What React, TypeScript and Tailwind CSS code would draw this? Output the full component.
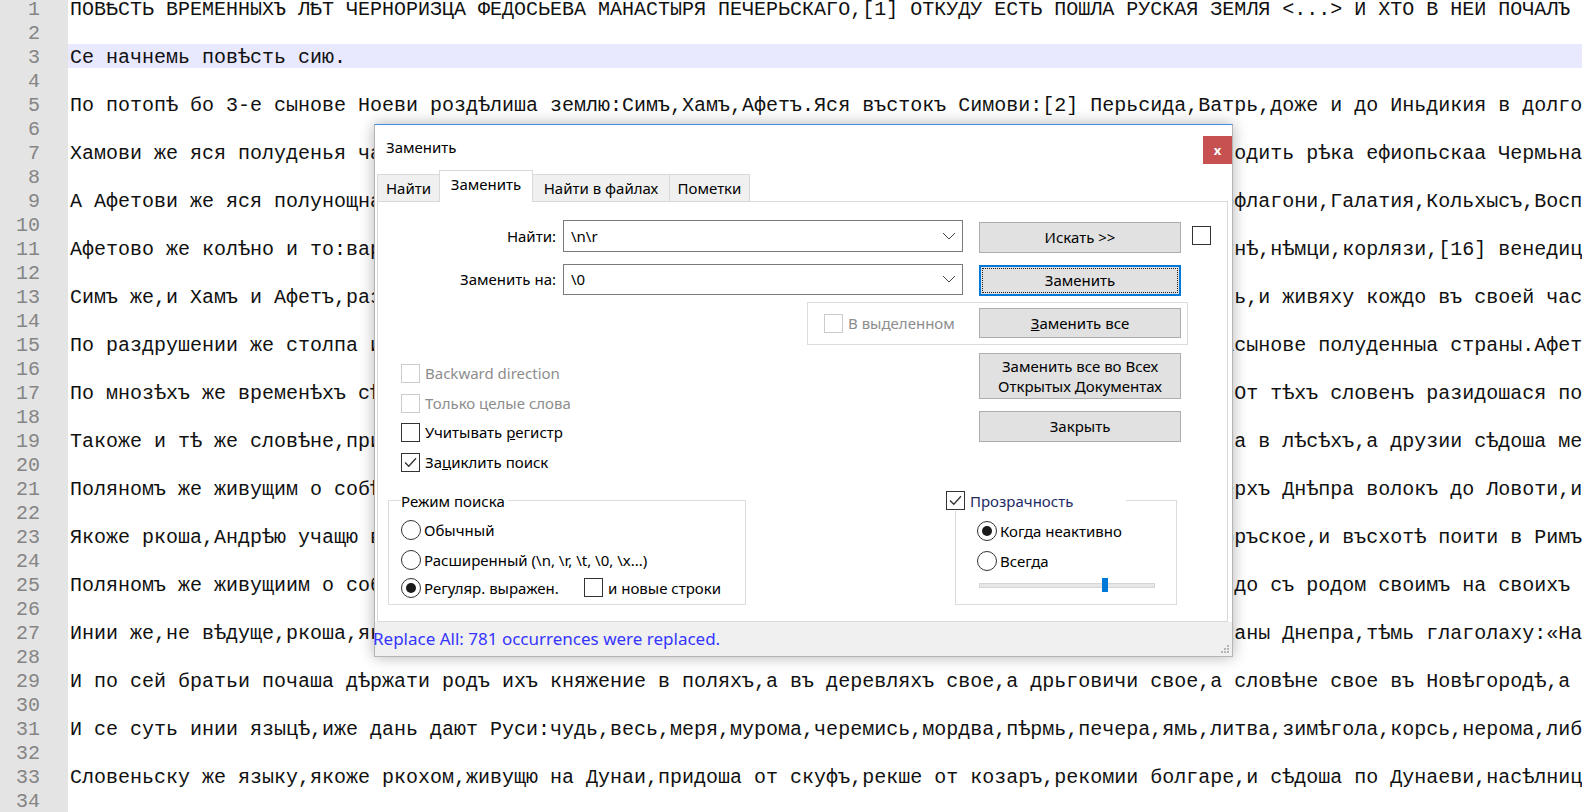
import React from 'react';

const FILL =
  'стьи:Егупетъ,Ефиопья,прилежащи ко Индомъ,другая же Ефиопья,из нея же исходить рѣка ефиопьскаа Чермьна,текущи на въстокъ,Фива,Ливия,прилежащи до Куриниа,Мармарья,Сурьтѣ,Ливия другая,Нумидья,Масурья,Мавритания противу сущи Гадирѣ.';

// left part + hidden middle + right part, so that the right part starts at column 97
const mk = (left: string, right: string, k: number) => left + FILL.slice(k, k + 97 - left.length) + right;

const lines: Record<number, string> = {
  1: 'ПОВѢСТЬ ВРЕМЕННЫХЪ ЛѢТ ЧЕРНОРИЗЦА ФЕДОСЬЕВА МАНАСТЫРЯ ПЕЧЕРЬСКАГО,[1] ОТКУДУ ЕСТЬ ПОШЛА РУСКАЯ ЗЕМЛЯ <...> И ХТО В НЕЙ ПОЧАЛЪ ПЕРВѢЕ КНЯЖИТИ',
  3: 'Се начнемь повѣсть сию.',
  5: 'По потопѣ бо 3-е сынове Ноеви роздѣлиша землю:Симъ,Хамъ,Афетъ.Яся въстокъ Симови:[2] Перьсида,Ватрь,доже и до Иньдикия в долготу и в ширину',
  7: mk('Хамови же яся полуденья ча', 'одить рѣка ефиопьскаа Чермьна,текущи на въстокъ', 0),
  9: mk('А Афетови же яся полунощная страны', 'флагони,Галатия,Кольхысъ,Воспории,Меоти', 10),
  11: mk('Афетово же колѣно и то:варязи,свеи,урмане', 'нѣ,нѣмци,корлязи,[16] венедици,фрягове', 20),
  13: mk('Симъ же,и Хамъ и Афетъ,раздѣлиша землю', 'ь,и живяху кождо въ своей части.', 30),
  15: mk('По раздрушении же столпа и', 'сынове полуденныа страны.Афетови же', 40),
  17: mk('По мнозѣхъ же временѣхъ сѣли суть словѣни', 'От тѣхъ словенъ разидошася по земли', 5),
  19: mk('Такоже и тѣ же словѣне,пришедше', 'а в лѣсѣхъ,а друзии сѣдоша межи Припетью', 15),
  21: mk('Поляномъ же живущим о собѣ', 'рхъ Днѣпра волокъ до Ловоти,и по Ловоти', 25),
  23: mk('Якоже ркоша,Андрѣю учащю въ Синопии', 'ръское,и въсхотѣ поити в Римъ.', 35),
  25: mk('Поляномъ же живущиим о собѣ', 'до съ родом своимъ на своихъ мѣстѣхъ', 45),
  27: mk('Инии же,не вѣдуще,ркоша,якоже', 'аны Днепра,тѣмь глаголаху:«На перевозъ', 50),
  29: 'И по сей братьи почаша дѣржати родъ ихъ княжение в поляхъ,а въ деревляхъ свое,а дрьговичи свое,а словѣне свое въ Новѣгородѣ,а другое на Полотѣ',
  31: 'И се суть инии языцѣ,иже дань дают Руси:чудь,весь,меря,мурома,черемись,мордва,пѣрмь,печера,ямь,литва,зимѣгола,корсь,нерома,либь',
  33: 'Словеньску же языку,якоже ркохом,живущю на Дунаи,придоша от скуфъ,рекше от козаръ,рекомии болгаре,и сѣдоша по Дунаеви,насѣлници словеномъ',
};

const nums = Array.from({ length: 34 }, (_, i) => i + 1);

const Check = ({
  checked = false,
  disabled = false,
  children,
}: {
  checked?: boolean;
  disabled?: boolean;
  children?: React.ReactNode;
}) => (
  <div className="flex h-[20px] items-center">
    <span
      className={`flex h-[19px] w-[19px] shrink-0 items-center justify-center border bg-white ${
        disabled ? 'border-[#cccccc]' : 'border-[#333333]'
      }`}
    >
      {checked && (
        <svg width="15" height="15" viewBox="0 0 15 15">
          <path d="M2 7.5 L5.8 11.3 L13 3.2" fill="none" stroke="#333" strokeWidth="1.3" />
        </svg>
      )}
    </span>
    {children && <span className={`ml-[5px] ${disabled ? 'text-[#8d8d8d]' : ''}`}>{children}</span>}
  </div>
);

const Radio = ({ on = false, children }: { on?: boolean; children: React.ReactNode }) => (
  <div className="flex h-[20px] items-center">
    <span className="flex h-[20px] w-[20px] shrink-0 items-center justify-center rounded-full border border-[#333333] bg-white">
      {on && <span className="h-[10px] w-[10px] rounded-full bg-[#1a1a1a]" />}
    </span>
    <span className="ml-[3px]">{children}</span>
  </div>
);

const Btn = ({ children, className = '' }: { children: React.ReactNode; className?: string }) => (
  <div
    className={`flex w-[202px] items-center justify-center border border-[#adadad] bg-[#e1e1e1] text-center ${className}`}
  >
    {children}
  </div>
);

const Combo = ({ value }: { value: string }) => (
  <div className="flex h-full w-[400px] items-center justify-between border border-[#7a7a7a] bg-white pl-[7px] pr-[6px]">
    <span>{value}</span>
    <svg width="14" height="8" viewBox="0 0 14 8">
      <path d="M1 1 L7 7 L13 1" fill="none" stroke="#444" strokeWidth="1" />
    </svg>
  </div>
);

const App = () => {
  return (
    <div className="relative h-[812px] w-[1582px] overflow-hidden bg-white">
      {/* editor */}
      <div className="-mt-[4px] flex font-['Liberation_Mono',monospace] text-[20px]">
        <div className="flex w-[68px] shrink-0 bg-[#e4e4e4]">
          <div className="w-[40px] text-right text-[#858585]">
            {nums.map((n) => (
              <div key={n} className="h-[24px] leading-[28px]">
                {n}
              </div>
            ))}
          </div>
        </div>
        <div className="min-w-0 flex-1 overflow-hidden text-[#111]">
          {nums.map((n) => (
            <div
              key={n}
              className={`h-[24px] whitespace-pre pl-[2px] leading-[28px] ${n === 3 ? 'bg-[#e8e8ff]' : ''}`}
            >
              {lines[n] ?? ''}
            </div>
          ))}
        </div>
      </div>

      {/* Replace dialog */}
      <div className="absolute left-[374px] top-[124px] flex h-[533px] w-[859px] flex-col border border-[#b4b4b4] border-t-[#3f8fdc] bg-white font-['Noto_Sans',sans-serif] text-[15px] text-black shadow-[0_0_14px_rgba(0,0,0,0.3)]">
        <div className="flex h-[45px] items-start justify-between">
          <span className="ml-[11px] mt-[12px] leading-[20px]">Заменить</span>
          <div className="mt-[11px] flex h-[28px] w-[29px] items-center justify-center bg-[#c75050] text-[13px] font-bold leading-none text-white">
            x
          </div>
        </div>

        {/* tabs */}
        <div className="relative z-10 -mb-px flex h-[32px] items-end pl-[2px]">
          <div className="flex h-[28px] w-[62px] items-center justify-center border border-r-0 border-[#d9d9d9] bg-[#f0f0f0] pt-[1px]">
            Найти
          </div>
          <div className="flex h-[32px] w-[94px] items-start justify-center border border-b-0 border-[#d9d9d9] bg-white pt-[2px]">
            Заменить
          </div>
          <div className="flex h-[28px] w-[137px] items-center justify-center border border-l-0 border-[#d9d9d9] bg-[#f0f0f0] pt-[1px]">
            Найти в файлах
          </div>
          <div className="flex h-[28px] w-[80px] items-center justify-center border border-l-0 border-[#d9d9d9] bg-[#f0f0f0] pt-[1px]">
            Пометки
          </div>
        </div>

        {/* tab panel */}
        <div className="ml-[2px] mr-[4px] h-[422px] border border-[#d9d9d9] bg-white">
          <div className="mt-[18px] flex">
            <div className="flex w-[585px] flex-col">
              <div className="flex h-[32px] items-center">
                <span className="w-[185px] pr-[7px] text-right">Найти:</span>
                <Combo value="\n\r" />
              </div>
              <div className="mt-[12px] flex h-[31px] items-center">
                <span className="w-[185px] pr-[7px] text-right">Заменить на:</span>
                <Combo value="\0" />
              </div>
            </div>
            <div className="ml-[16px] flex flex-col">
              <Btn className="mt-[2px] h-[31px]">Искать &gt;&gt;</Btn>
              <div className="mt-[12px] h-[31px] w-[202px] border-2 border-[#0078d7] bg-[#e1e1e1] p-[1px]">
                <div className="flex h-full w-full items-center justify-center border border-dotted border-[#222]">
                  Заменить
                </div>
              </div>
            </div>
            <div className="ml-[11px] mt-[6px]">
              <Check />
            </div>
          </div>

          <div className="ml-[429px] mt-[6px] flex h-[43px] w-[381px] items-center border border-[#dcdcdc] pl-[16px] pr-[6px]">
            <Check disabled>В выделенном</Check>
            <Btn className="ml-auto h-[30px]">
              <span>
                <span className="underline">З</span>аменить все
              </span>
            </Btn>
          </div>

          <div className="mt-[8px] flex">
            <div className="w-[568px]">
              <div className="mt-[6px] pl-[23px]">
                <div className="flex h-[29.5px] items-center">
                  <Check disabled>Backward direction</Check>
                </div>
                <div className="flex h-[29.5px] items-center">
                  <Check disabled>Только целые слова</Check>
                </div>
                <div className="flex h-[29.5px] items-center">
                  <Check>
                    Учитывать <span className="underline">р</span>егистр
                  </Check>
                </div>
                <div className="flex h-[29.5px] items-center">
                  <Check checked>
                    За<span className="underline">ц</span>иклить поиск
                  </Check>
                </div>
              </div>

              <div className="ml-[10px] mt-[23px] h-[105px] w-[358px] border border-[#dcdcdc] pl-[12px]">
                <div className="-mt-[10px] h-[20px] w-fit bg-white pr-[3px] leading-[20px]">Режим поиска</div>
                <div className="mt-[9px]">
                  <Radio>Обычный</Radio>
                </div>
                <div className="mt-[10px]">
                  <Radio>Расширенный (\n, \r, \t, \0, \x...)</Radio>
                </div>
                <div className="mt-[8px] flex items-center">
                  <div className="w-[183px]">
                    <Radio on>Регуляр. выражен.</Radio>
                  </div>
                  <Check>и новые строки</Check>
                </div>
              </div>
            </div>

            <div className="flex flex-col">
              <Btn className="ml-[33px] h-[46px] leading-[20px]">
                <span>
                  Заменить все во Всех
                  <br />
                  Открытых <span className="underline">Д</span>окументах
                </span>
              </Btn>
              <Btn className="ml-[33px] mt-[12px] h-[31px]">Закрыть</Btn>

              <div className="ml-[9px] mt-[58px] h-[105px] w-[222px] border border-[#dcdcdc]">
                <div className="-ml-[10px] -mt-[10px] flex h-[20px] w-[180px] items-center bg-white">
                  <Check checked>
                    <span className="text-[#1e2a66]">Прозрачность</span>
                  </Check>
                </div>
                <div className="mt-[10px] pl-[21px]">
                  <Radio on>Когда неактивно</Radio>
                </div>
                <div className="mt-[10px] pl-[21px]">
                  <Radio>Всегда</Radio>
                </div>
                <div className="ml-[23px] mt-[8px] flex h-[14px] w-[176px] items-center">
                  <div className="relative h-[5px] w-full border border-[#d6d6d6] bg-[#e7e7e7]">
                    <div className="absolute left-[122px] top-[-6px] h-[14px] w-[6px] bg-[#0078d7]" />
                  </div>
                </div>
              </div>
            </div>
          </div>
        </div>

        {/* status bar */}
        <div className="flex h-[34px] items-center justify-between bg-[#f0f0f0]">
          <span className="-ml-[2px] text-[17px] leading-[20px] text-[#3535ff]">
            Replace All: 781 occurrences were replaced.
          </span>
          <svg width="12" height="12" viewBox="0 0 12 12" className="mr-[2px] mt-[18px]">
            <rect x="9" y="9" width="2" height="2" fill="#b5b5b5" />
            <rect x="6" y="9" width="2" height="2" fill="#b5b5b5" />
            <rect x="3" y="9" width="2" height="2" fill="#b5b5b5" />
            <rect x="9" y="6" width="2" height="2" fill="#b5b5b5" />
            <rect x="6" y="6" width="2" height="2" fill="#b5b5b5" />
            <rect x="9" y="3" width="2" height="2" fill="#b5b5b5" />
          </svg>
        </div>
      </div>
    </div>
  );
};

export default App;
